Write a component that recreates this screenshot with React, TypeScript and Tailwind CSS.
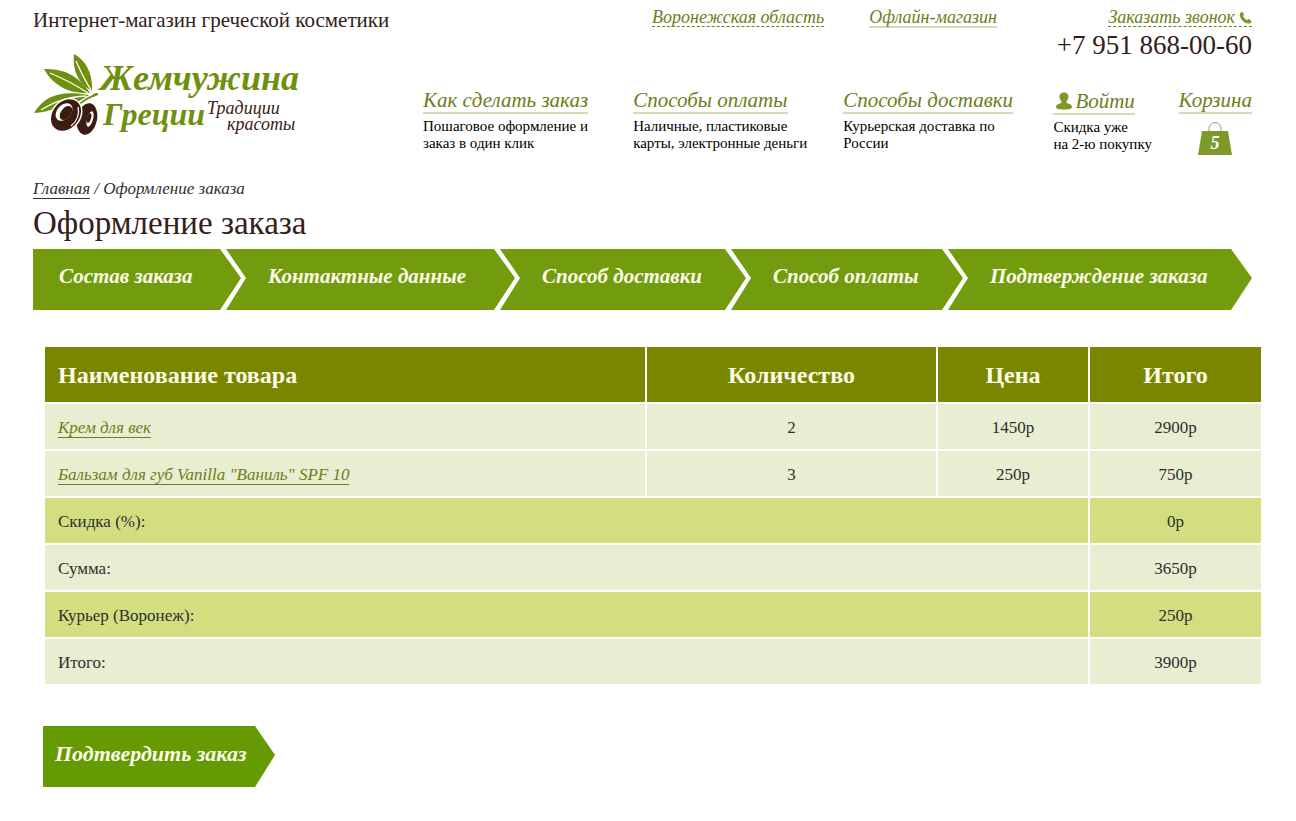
const navItems = [
  { title: "Как сделать заказ", text: "Пошаговое оформление и заказ в один клик" },
  { title: "Способы оплаты", text: "Наличные, пластиковые карты, электронные деньги" },
  { title: "Способы доставки", text: "Курьерская доставка по России" },
];

const steps = [
  { title: "Состав заказа", size: "basis-[208px]" },
  { title: "Контактные данные", size: "basis-[289px]" },
  { title: "Способ доставки", size: "basis-[246px]" },
  { title: "Способ оплаты", size: "basis-[232px]" },
  { title: "Подтверждение заказа", size: "basis-[304px]" },
];

const products = [
  { name: "Крем для век", count: 2, price: "1450р", total: "2900р" },
  { name: 'Бальзам для губ Vanilla "Ваниль" SPF 10', count: 3, price: "250р", total: "750р" },
];

const totals = [
  { label: "Скидка (%):", value: "0р", row: "bg-[#d3de80]" },
  { label: "Сумма:", value: "3650р", row: "bg-[#e9edd1]" },
  { label: "Курьер (Воронеж):", value: "250р", row: "bg-[#d3de80]" },
  { label: "Итого:", value: "3900р", row: "bg-[#e9edd1]" },
];

function Logo() {
  return (
    <svg
      viewBox="0 0 268 90"
      className="h-[90px] w-[268px]"
      role="img"
      aria-label="Жемчужина Греции"
      fontFamily="'Liberation Serif', serif"
      fontStyle="italic"
    >
      <g fill="#6f8f0e">
        <path d="M41 2 C52 8 60 20 59 39 C47 33 39 20 41 2 Z" />
        <path d="M11 17 C30 17 44 22 57 41 C38 42 21 35 11 17 Z" />
        <path d="M1 61 C12 43 28 38 56 43 C46 49 44 51 36 52 C26 54 18 60 1 61 Z" />
      </g>
      <g fill="none" stroke="#fff" strokeWidth="1.3">
        <path d="M43 9 C47 18 51 27 58 38" />
        <path d="M17 21 C29 26 41 32 55 41" />
        <path d="M8 58 C21 50 33 45 53 44" />
      </g>
      <path d="M47 52 C50 48 55 46 64 42" fill="none" stroke="#6f8f0e" strokeWidth="2" />
      <path d="M60 42 L65 41 L65 43 L60 45 Z" fill="#6f8f0e" />
      <ellipse cx="54" cy="67" rx="10" ry="16" transform="rotate(12 54 67)" fill="#3c1b10" />
      <ellipse cx="57" cy="67" rx="3" ry="8" transform="rotate(16 57 67)" fill="#fff" />
      <ellipse cx="56" cy="66" rx="2" ry="5" transform="rotate(16 56 66)" fill="#3c1b10" />
      <ellipse cx="33" cy="63" rx="18" ry="14" transform="rotate(-50 33 63)" fill="#3c1b10" stroke="#fff" strokeWidth="1.5" />
      <ellipse cx="31" cy="60" rx="10" ry="7" transform="rotate(-48 31 60)" fill="#fff" />
      <ellipse cx="33" cy="61" rx="8" ry="5" transform="rotate(-52 33 61)" fill="#3c1b10" />
      <path d="M38 74 C44 69 47 63 45 55" fill="none" stroke="#fff" strokeWidth="1.2" />
      <text x="67" y="38" fontSize="36" fontWeight="bold" fill="#6f8f0e">Жемчужина</text>
      <text x="70" y="73" fontSize="32" fontWeight="bold" fill="#6f8f0e">Греции</text>
      <text x="174" y="62" fontSize="18" fill="#3c1b10">Традиции</text>
      <text x="194" y="78" fontSize="18" fill="#3c1b10">красоты</text>
    </svg>
  );
}

export default function App() {
  return (
    <div className="bg-white pb-8 font-['Liberation_Serif',serif] text-[#2f2f2f]">
      <header className="flex pt-2 pr-11 pl-[33px] text-[#33201a]">
        <div className="w-[390px] shrink-0">
          <p className="text-[21px] leading-6">Интернет-магазин греческой косметики</p>
          <a href="#" className="mt-5 block">
            <Logo />
          </a>
        </div>
        <div className="grow">
          <div className="flex h-[81px] justify-between text-lg leading-[18px] text-[#6b8018] italic">
            <div className="flex grow gap-[45px] pl-[229px]">
              <div>
                <button type="button" className="border-b border-dashed border-[#6b8018] italic">Воронежская область</button>
              </div>
              <div>
                <a href="#" className="block border-b-2 border-[#d5dbb8]">Офлайн-магазин</a>
              </div>
            </div>
            <div className="flex flex-col items-end">
              <button type="button" className="flex items-center gap-1 border-b border-dashed border-[#6b8018] italic">
                Заказать звонок
                <svg viewBox="0 0 14 14" className="size-[13px]" fill="#7d9a28">
                  <path d="M3 .5C1 1.500.3 3.800 1.300 6.500 2.800 10.300 6.300 13.300 10 13.500c2 0 3.200-1 3.700-2.300L10.500 8.300 8.700 9.800C6.800 8.800 5.300 7.300 4.300 5.300L5.700 3.800Z" />
                </svg>
              </button>
              <span className="mt-0.5 text-[27px] leading-8 text-[#33201a] not-italic">+7 951 868-00-60</span>
            </div>
          </div>
          <div className="flex justify-between">
            {navItems.map((item) => (
              <div key={item.title} className="w-[210px] pr-6">
                <a href="#" className="inline-block border-b-2 border-[#d5dbb8] text-[21px] leading-[23px] whitespace-nowrap text-[#6b8018] italic">{item.title}</a>
                <p className="mt-1 text-[15px] leading-[17px] text-black">{item.text}</p>
              </div>
            ))}
            <div className="w-[125px]">
              <a href="#" className="inline-flex items-center gap-[3px] border-b-2 border-[#d5dbb8] pl-[3px] text-[21px] leading-6 text-[#6b8018] italic">
                <svg viewBox="0 0 16 18" className="h-[18px] w-4" fill="#7d9a28">
                  <path d="M8 .5c3.200 0 4.800 2.200 4.500 5-.3 2.300-2 3.300-2 5 0 1.200 5.500 1 5.500 4.500 0 1.800-3 2.500-8 2.500s-8-.7-8-2.500c0-3.500 5.500-3.300 5.500-4.500 0-1.700-1.700-2.700-2-5C3.200 2.700 4.800.5 8 .5Z" />
                </svg>
                Войти
              </a>
              <p className="mt-0.5 text-[15px] leading-[17px] text-black">Скидка уже<br />на 2-ю покупку</p>
            </div>
            <div className="flex flex-col items-center">
              <a href="#" className="border-b-2 border-[#d5dbb8] text-[21px] leading-[23px] text-[#6b8018] italic">Корзина</a>
              <svg viewBox="0 0 36 34" className="mt-[7px] h-[34px] w-9">
                <path d="M12 11V7.500a6 6 0 0 1 12 0V11" fill="none" stroke="#9a9a80" />
                <path d="M5 10h26l4 24H1Z" fill="#7d9a28" />
                <text x="18" y="28" textAnchor="middle" fontSize="18" fontWeight="bold" fontStyle="italic" fill="#fff">5</text>
              </svg>
            </div>
          </div>
        </div>
      </header>

      <main>
        <div className="pr-11 pl-[33px]">
          <nav className="mt-6 text-[17px] leading-5 italic">
            <a href="#" className="border-b border-[#2f2f2f]">Главная</a> / Оформление заказа
          </nav>
          <h1 className="mt-1 text-[33px] leading-10 text-[#33201a]">Оформление заказа</h1>
          <ol className="mt-1.5 flex text-[21px] leading-[54px] font-bold text-[#fbfde8] italic">
            {steps.map((step, i) => (
              <li
                key={step.title}
                className={`h-[61px] grow bg-[#739b0e] whitespace-nowrap ${step.size} ${
                  i === 0
                    ? "pl-[26px] [clip-path:polygon(0_0,calc(100%-21px)_0,100%_29px,calc(100%-21px)_100%,0_100%)]"
                    : "-ml-[15px] pl-[42px] [clip-path:polygon(0_0,calc(100%-21px)_0,100%_29px,calc(100%-21px)_100%,0_100%,20px_29px)]"
                }`}
              >
                {step.title}
              </li>
            ))}
          </ol>
        </div>

        <div className="mt-[35px] pr-[33px] pl-[43px]">
          <table className="w-full table-fixed border-separate border-spacing-[2px] text-[17px]">
            <colgroup>
              <col />
              <col className="w-[289px]" />
              <col className="w-[150px]" />
              <col className="w-[171px]" />
            </colgroup>
            <thead>
              <tr className="h-[55px] bg-[#7a8500] text-2xl text-[#fbfde8]">
                <th className="px-[13px] text-left">Наименование товара</th>
                <th>Количество</th>
                <th>Цена</th>
                <th>Итого</th>
              </tr>
            </thead>
            <tbody>
              {products.map((product) => (
                <tr key={product.name} className="h-[45px] bg-[#e9edd1] text-center">
                  <td className="px-[13px] pt-0.5 text-left">
                    <a href="#" className="border-b border-[#6b8018] text-[#6b8018] italic">{product.name}</a>
                  </td>
                  <td className="pt-0.5">{product.count}</td>
                  <td className="pt-0.5">{product.price}</td>
                  <td className="pt-0.5">{product.total}</td>
                </tr>
              ))}
              {totals.map((total) => (
                <tr key={total.label} className={`h-[45px] ${total.row}`}>
                  <td colSpan={3} className="px-[13px] pt-0.5">{total.label}</td>
                  <td className="pt-0.5 text-center">{total.value}</td>
                </tr>
              ))}
            </tbody>
          </table>
          <button
            type="button"
            className="mt-10 h-[61px] w-[232px] bg-[#659a02] pb-[7px] pl-3 text-left text-[22px] font-bold text-[#fbfde8] italic [clip-path:polygon(0_0,calc(100%-20px)_0,100%_29px,calc(100%-20px)_100%,0_100%)]"
          >
            Подтвердить заказ
          </button>
        </div>
      </main>
    </div>
  );
}
